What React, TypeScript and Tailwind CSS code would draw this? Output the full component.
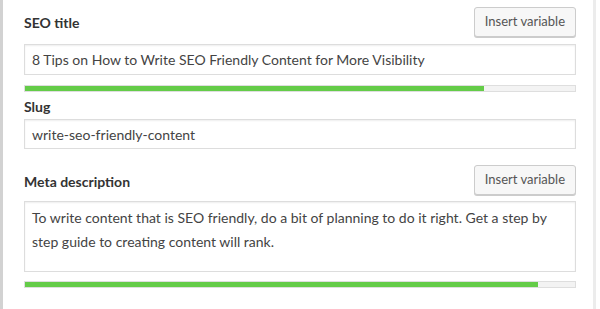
type BarProps = { percent: number };

function ProgressBar({ percent }: BarProps) {
	return (
		<div className="h-[7px] w-full border border-[#dedede] bg-[#f3f3f3]">
			<div className="h-full bg-[#64cc48]" style={{ width: `${percent}%` }} />
		</div>
	);
}

function InsertButton() {
	return (
		<button className="h-[30px] rounded-[3px] border border-[#cccccc] bg-[#f7f7f7] px-[10px] text-[13px] text-[#555] shadow-[0_1px_0_#cccccc]">
			Insert variable
		</button>
	);
}

const inputClass =
	"w-full border border-[#dddddd] bg-white px-[7px] text-[14px] text-[#444] shadow-[inset_0_1px_2px_rgba(0,0,0,0.07)]";

export default function App() {
	return (
		<div
			className="flex h-[309px] w-[600px] bg-white"
			style={{ fontFamily: "Lato, 'Open Sans', sans-serif" }}
		>
			<div className="w-[3px] bg-[#d2d2d2]" />
			<div className="flex w-[552px] ml-[21px] flex-col">
				<div className="mt-[7px] flex items-center justify-between">
					<label className="text-[14px] font-bold text-[#333]">SEO title</label>
					<InsertButton />
				</div>
				<div className={`${inputClass} mt-[7px] flex h-[31px] items-center`}>
					8 Tips on How to Write SEO Friendly Content for More Visibility
				</div>
				<div className="mt-[10px]">
					<ProgressBar percent={83.5} />
				</div>
				<label className="mt-[5px] text-[14px] font-bold leading-[20px] text-[#333]">
					Slug
				</label>
				<div className={`${inputClass} mt-[2px] flex h-[30px] items-center`}>
					write-seo-friendly-content
				</div>
				<div className="mt-[16px] flex items-end justify-between">
					<label className="mb-[3px] text-[14px] font-bold text-[#333]">
						Meta description
					</label>
					<InsertButton />
				</div>
				<div className={`${inputClass} mt-[6px] h-[71px] pt-[4px] leading-[24px]`}>
					To write content that is SEO friendly, do a bit of planning to do it
					right. Get a step by step guide to creating content will rank.
				</div>
				<div className="mt-[9px]">
					<ProgressBar percent={93.3} />
				</div>
			</div>
			<div className="ml-[17px] w-[3px] bg-[#ececec]" />
		</div>
	);
}
